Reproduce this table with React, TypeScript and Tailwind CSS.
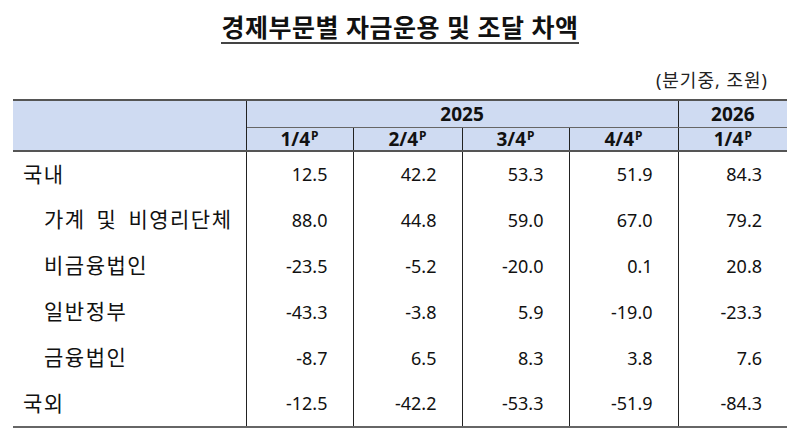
import React from "react";

const rows: { label: string; sub: boolean; vals: string[] }[] = [
  { label: "국내", sub: false, vals: ["12.5", "42.2", "53.3", "51.9", "84.3"] },
  { label: "가계 및 비영리단체", sub: true, vals: ["88.0", "44.8", "59.0", "67.0", "79.2"] },
  { label: "비금융법인", sub: true, vals: ["-23.5", "-5.2", "-20.0", "0.1", "20.8"] },
  { label: "일반정부", sub: true, vals: ["-43.3", "-3.8", "5.9", "-19.0", "-23.3"] },
  { label: "금융법인", sub: true, vals: ["-8.7", "6.5", "8.3", "3.8", "7.6"] },
  { label: "국외", sub: false, vals: ["-12.5", "-42.2", "-53.3", "-51.9", "-84.3"] },
];

const quarters = ["1/4", "2/4", "3/4", "4/4"];

function Q({ q }: { q: string }) {
  return (
    <span className="inline-flex items-start leading-[22px]">
      <span>{q}</span>
      <span className="text-[12px] font-bold leading-[12px] mt-[2px] ml-[1px]">P</span>
    </span>
  );
}

export default function App() {
  return (
    <div className="w-[800px] h-[446px] bg-white text-[#111] font-[Noto_Sans,Noto_Sans_CJK_KR,sans-serif] overflow-hidden">
      <div className="h-[60px] flex justify-center pt-[14px]">
        <span className="inline-block h-[30px] text-[25px] leading-[27px] font-bold tracking-[0.5px] border-b-2 border-[#444] text-[#111]">
          경제부문별 자금운용 및 조달 차액
        </span>
      </div>
      <div className="h-[39px] flex items-start justify-end pr-[32px] pt-[9px] text-[18px] leading-[22px] text-[#222] tracking-[1px]">
        (분기중, 조원)
      </div>
      <div className="mx-[13px]">
        <table className="w-full border-collapse table-fixed">
          <colgroup>
            <col className="w-[233px]" />
            <col className="w-[107px]" />
            <col className="w-[109px]" />
            <col className="w-[107px]" />
            <col className="w-[109px]" />
            <col className="w-[109px]" />
          </colgroup>
          <thead className="bg-[#cfdbf2] font-bold text-[19px] text-[#111]">
            <tr className="h-[27px] border-t-2 border-[#555]">
              <th rowSpan={2} className="border-b-2 border-[#555] border-r border-r-[#222]"></th>
              <th colSpan={4} className="border-r border-r-[#222] border-b-[1.5px] border-b-[#666] leading-[24px] pt-[1px]">
                2025
              </th>
              <th className="border-b-[1.5px] border-b-[#666] leading-[24px] pt-[1px]">2026</th>
            </tr>
            <tr className="h-[24px] border-b-2 border-[#555]">
              {quarters.map((q) => (
                <th key={q} className="border-r border-r-[#222] leading-[22px]">
                  <Q q={q} />
                </th>
              ))}
              <th className="leading-[22px]">
                <Q q="1/4" />
              </th>
            </tr>
          </thead>
          <tbody className="text-[18px] text-[#111]">
            {rows.map((r, i) => (
              <tr key={r.label} className={`h-[46px] ${i === rows.length - 1 ? "border-b-2 border-[#666]" : ""}`}>
                <td className={`border-r border-r-[#222] text-[21px] tracking-[1.5px] [word-spacing:4px] whitespace-nowrap ${r.sub ? "pl-[31px]" : "pl-[10px]"}`}>
                  {r.label}
                </td>
                {r.vals.map((v, j) => (
                  <td
                    key={j}
                    className={`text-right pr-[25px] ${j < 4 ? "border-r border-r-[#222]" : ""}`}
                  >
                    {v}
                  </td>
                ))}
              </tr>
            ))}
          </tbody>
        </table>
      </div>
    </div>
  );
}
